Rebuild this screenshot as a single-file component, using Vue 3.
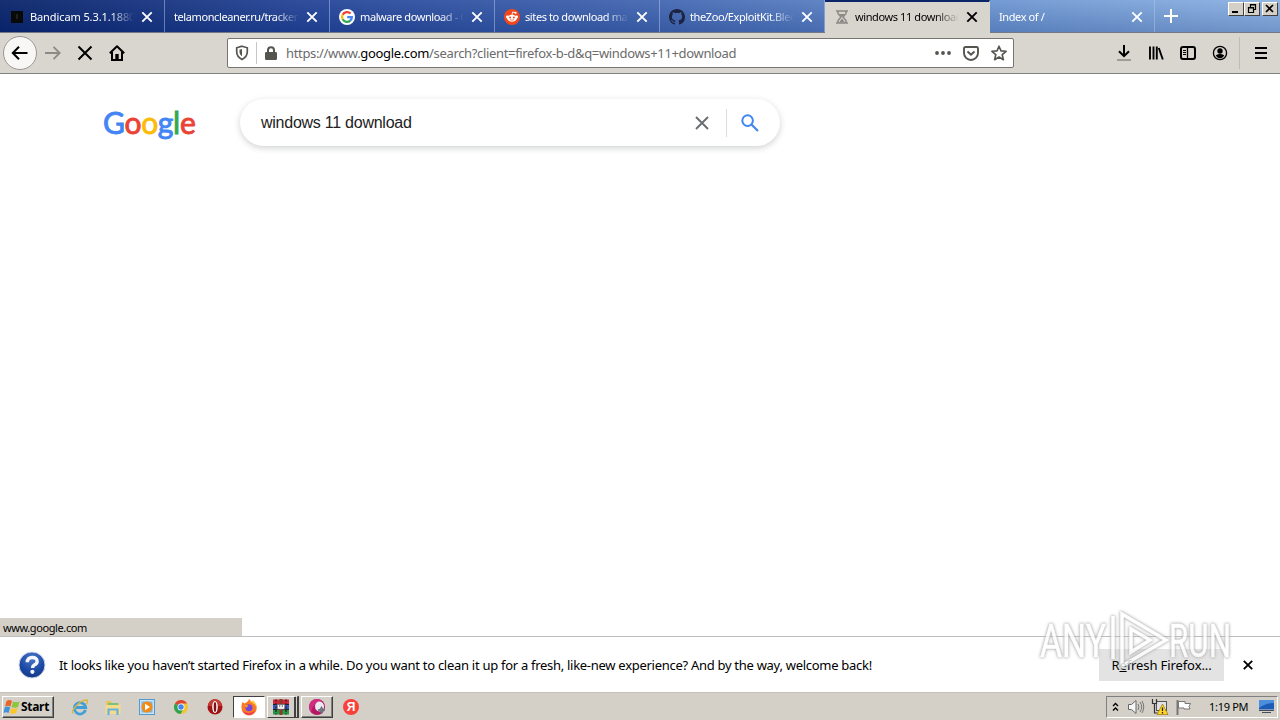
<script setup>
const tabs = [
    { title: 'Bandicam 5.3.1.1880', icon: 'bandicam', cls: 'wide' },
    { title: 'telamoncleaner.ru/tracker', icon: '', cls: '' },
    { title: 'malware download - G', icon: 'google', cls: '' },
    { title: 'sites to download mal', icon: 'reddit', cls: '' },
    { title: 'theZoo/ExploitKit.Blee', icon: 'github', cls: '' },
    { title: 'windows 11 download', icon: 'hourglass', cls: '', active: true },
    { title: 'Index of /', icon: '', cls: '' }
]
</script>

<template>
    <div class="screen">
        <div class="tabs">
            <div v-for="t in tabs" :key="t.title" class="tab" :class="{ active: t.active }">
                <svg v-if="t.icon === 'bandicam'" class="fav" viewBox="0 0 16 16">
                    <rect x="2" y="2" width="12" height="12" fill="#090909" />
                    <path d="M8 5v5" stroke="#3a3a3a" />
                </svg>
                <svg v-if="t.icon === 'google'" class="fav" viewBox="0 0 16 16">
                    <circle cx="8" cy="8" r="8" fill="#fff" />
                    <g fill="none" stroke-width="2.2">
                        <path d="M11.6 4.6A4.9 4.9 0 0 0 3.7 5.7" stroke="#ea4335" />
                        <path d="M3.7 5.6a4.9 4.9 0 0 0 0 4.8" stroke="#fbbc05" />
                        <path d="M3.7 10.3a4.9 4.9 0 0 0 7.6 1.3" stroke="#34a853" />
                        <path d="M11.2 11.7A4.9 4.9 0 0 0 12.9 8.1H8.2" stroke="#4285f4" />
                    </g>
                </svg>
                <svg v-if="t.icon === 'reddit'" class="fav" viewBox="0 0 16 16">
                    <circle cx="8" cy="8" r="8" fill="#f4471c" />
                    <path d="M8 6l.7-3 2.4.6" fill="none" stroke="#fff" stroke-width=".9" />
                    <circle cx="11.5" cy="3.8" r="1.1" fill="#fff" />
                    <circle cx="3.4" cy="8" r="1.4" fill="#fff" />
                    <circle cx="12.6" cy="8" r="1.4" fill="#fff" />
                    <ellipse cx="8" cy="9.2" rx="4.8" ry="3.5" fill="#fff" />
                    <circle cx="6.1" cy="8.4" r="1" fill="#f4471c" />
                    <circle cx="9.9" cy="8.4" r="1" fill="#f4471c" />
                    <path d="M5.9 10.7q2.1 1.2 4.2 0" fill="none" stroke="#f4471c" stroke-width=".7" />
                </svg>
                <svg v-if="t.icon === 'github'" class="fav" viewBox="0 0 16 16">
                    <path fill="#1b2440" d="M8 0C3.58 0 0 3.58 0 8c0 3.54 2.29 6.53 5.47 7.59.4.07.55-.17.55-.38 0-.19-.01-.82-.01-1.49-2.01.37-2.53-.49-2.69-.94-.09-.23-.48-.94-.82-1.13-.28-.15-.68-.52-.01-.53.63-.01 1.08.58 1.23.82.72 1.21 1.87.87 2.33.66.07-.52.28-.87.51-1.07-1.78-.2-3.64-.89-3.64-3.95 0-.87.31-1.59.82-2.15-.08-.2-.36-1.02.08-2.12 0 0 .67-.21 2.2.82a7.4 7.4 0 0 1 4 0c1.53-1.04 2.2-.82 2.2-.82.44 1.1.16 1.92.08 2.12.51.56.82 1.27.82 2.15 0 3.07-1.87 3.75-3.65 3.95.29.25.54.73.54 1.48 0 1.07-.01 1.93-.01 2.2 0 .21.15.46.55.38A8 8 0 0 0 16 8c0-4.42-3.58-8-8-8z" />
                </svg>
                <svg v-if="t.icon === 'hourglass'" class="fav" viewBox="0 0 16 16">
                    <path d="M2 2h12M2 14h12M4 2.500v2L7 8l-3 3.500v2M12 2.500v2L9 8l3 3.500v2" fill="none" stroke="#8b8985" stroke-width="1.500" />
                    <path d="M5 5h6L8 8zM8 9.500l3 4H5z" fill="#8b8985" />
                </svg>
                <span class="title" :class="t.cls">{{ t.title }}</span>
                <svg class="close" viewBox="0 0 12 12">
                    <path d="M1.300 1.300l9.400 9.400M10.700 1.300l-9.400 9.400" stroke="currentColor" stroke-width="1.9" />
                </svg>
            </div>
            <svg class="plus" viewBox="0 0 14 14"><path d="M7 0v14M0 7h14" stroke="#fff" stroke-width="2" /></svg>
            <div class="winbtns">
                <span class="wb"><svg viewBox="0 0 13 11"><path d="M3 9h6" stroke="#000" stroke-width="2" /></svg></span>
                <span class="wb"><svg viewBox="0 0 13 11"><path d="M5.500 4V1.500h5v5H8M5 2h6" fill="none" stroke="#000" stroke-width="1.200" /><path d="M3.500 4.500h5v5h-5zM3 5h6" fill="none" stroke="#000" stroke-width="1.200" /></svg></span>
                <span class="wb last"><svg viewBox="0 0 13 11"><path d="M3 2l7 7M10 2L3 9" stroke="#000" stroke-width="1.700" /></svg></span>
            </div>
        </div>

        <div class="nav">
            <div class="back">
                <svg width="18" height="16" viewBox="0 0 18 16"><path d="M16.500 8H2M8 1.800L1.800 8 8 14.200" fill="none" stroke="#000" stroke-width="2" /></svg>
            </div>
            <svg class="fwd" width="18" height="16" viewBox="0 0 18 16"><path d="M1 8h14.500M9.500 1.800L15.700 8l-6.200 6.200" fill="none" stroke="#8c8a86" stroke-width="1.800" /></svg>
            <svg class="stop" width="16" height="16" viewBox="0 0 16 16"><path d="M1.500 1.500l13 13M14.500 1.500l-13 13" stroke="#000" stroke-width="2" /></svg>
            <svg class="home" width="16" height="16" viewBox="0 0 16 16">
                <path d="M.8 8.300L8 1.200l7.200 7.100" fill="none" stroke="#000" stroke-width="2" stroke-linejoin="round" />
                <path d="M3 7v8h10V7" fill="none" stroke="#000" stroke-width="2" />
                <path d="M6.300 15V9h3.400v6z" fill="#000" />
            </svg>
            <div class="urlbar">
                <svg class="shield" width="14" height="16" viewBox="0 0 14 16">
                    <path d="M7 1.200l5.300 1.600v4c0 3.600-2 6-5.300 7.700-3.300-1.700-5.300-4.100-5.300-7.700v-4z" fill="none" stroke="#55544f" stroke-width="1.700" />
                    <path d="M7 4v7.300C5.200 10 4.500 8.600 4.500 6.800V4.700z" fill="#55544f" />
                </svg>
                <i class="vsep"></i>
                <svg class="lock" width="12" height="14" viewBox="0 0 12 14">
                    <path d="M3 7V4.300a3 3 0 0 1 6 0V7" fill="none" stroke="#55544f" stroke-width="2" />
                    <rect x="0" y="6" width="12" height="8" rx="1.300" fill="#55544f" />
                </svg>
                <span class="url">https://www.<b>google.com</b>/search?client=firefox-b-d&amp;q=windows+11+download</span>
                <svg class="dots" width="16" height="4" viewBox="0 0 16 4"><g fill="#55544f"><circle cx="2" cy="2" r="1.900" /><circle cx="8" cy="2" r="1.900" /><circle cx="14" cy="2" r="1.900" /></g></svg>
                <svg class="pocket" width="16" height="15" viewBox="0 0 16 15">
                    <path d="M1 2.500Q1 1 2.500 1h11Q15 1 15 2.500V7a7 7 0 0 1-14 0z" fill="none" stroke="#55544f" stroke-width="1.900" />
                    <path d="M4.500 5.500L8 8.800l3.500-3.300" fill="none" stroke="#55544f" stroke-width="1.900" />
                </svg>
                <svg class="star" width="16" height="16" viewBox="0 0 16 16"><path d="M8 1.200l2 4.700 5.100.4-3.900 3.400 1.200 5L8 12l-4.400 2.700 1.200-5L.9 6.300 6 5.900z" fill="none" stroke="#55544f" stroke-width="1.600" stroke-linejoin="round" /></svg>
            </div>
            <div class="tools">
                <svg width="16" height="18" viewBox="0 0 16 18"><path d="M8 1v11M3 7.200l5 5 5-5" fill="none" stroke="#000" stroke-width="2" /><path d="M1 16h14" stroke="#8b8985" stroke-width="1.500" /></svg>
                <svg width="16" height="16" viewBox="0 0 16 16"><path d="M2 1.500v13M5.500 1.500v13M8.800 1.500v13M10.800 3l4 11.500" stroke="#000" stroke-width="1.900" /></svg>
                <svg width="16" height="16" viewBox="0 0 16 16"><rect x="1" y="2" width="14" height="12" rx="2" fill="none" stroke="#000" stroke-width="2" /><path d="M7.500 2v12" stroke="#000" stroke-width="1.300" /><path d="M3 5.500h3M3 7.500h3M3 9.500h3" stroke="#000" stroke-width="1" /></svg>
                <svg width="16" height="16" viewBox="0 0 16 16"><circle cx="8" cy="8" r="6.600" fill="none" stroke="#000" stroke-width="1.300" /><circle cx="8" cy="6" r="2.700" /><path d="M3.800 10.200q4.200-2.400 8.400 0-1.300 3-4.200 3t-4.200-3z" /></svg>
            </div>
            <i class="navsep"></i>
            <svg class="burger" width="12" height="12" viewBox="0 0 12 12"><path d="M0 1h12M0 6h12M0 11h12" stroke="#000" stroke-width="2" /></svg>
        </div>

        <div class="page">
            <div class="logo"><span class="b">G</span><span class="r">o</span><span class="y">o</span><span class="b">g</span><span class="g">l</span><span class="r">e</span></div>
            <div class="search">
                <span class="query">windows 11 download</span>
                <svg class="clear" width="14" height="14" viewBox="0 0 14 14"><path d="M1 1l12 12M13 1L1 13" stroke="#6a6d71" stroke-width="1.900" /></svg>
                <i class="ssep"></i>
                <svg class="lens" width="18" height="18" viewBox="0 0 18 18"><circle cx="6.600" cy="6.600" r="5.300" fill="none" stroke="#4285f4" stroke-width="2" /><path d="M10.500 10.500l6.500 6.500" stroke="#4285f4" stroke-width="2.200" /></svg>
            </div>
            <div class="status"><span>www.google.com</span></div>
        </div>

        <div class="notice">
            <svg class="help" width="28" height="28" viewBox="0 0 28 28">
                <defs>
                    <radialGradient id="hb" cx=".5" cy=".25" r=".8"><stop offset="0" stop-color="#4a78c8" /><stop offset=".6" stop-color="#1c49a5" /><stop offset="1" stop-color="#12347f" /></radialGradient>
                </defs>
                <circle cx="14" cy="14" r="13" fill="url(#hb)" stroke="#c9d3e8" />
                <path d="M9.300 11.200q0-4.700 4.900-4.700t4.900 3.900q0 2.100-2.600 3.400-2 1.100-2 3.200" fill="none" stroke="#f5f7fb" stroke-width="3.400" />
                <circle cx="14.400" cy="20.800" r="2.100" fill="#f5f7fb" />
            </svg>
            <span class="msg">It looks like you haven’t started Firefox in a while. Do you want to clean it up for a fresh, like-new experience? And by the way, welcome back!</span>
            <div class="refresh"><span>R<u>e</u>fresh Firefox...</span></div>
            <svg class="nclose" width="10" height="10" viewBox="0 0 10 10"><path d="M.8.8l8.400 8.400M9.200.8L.8 9.200" stroke="#000" stroke-width="1.900" /></svg>
        </div>

        <div class="taskbar">
            <div class="start">
                <svg width="18" height="16" viewBox="0 0 17 16">
                    <path d="M3 2q3-2 5.500 0L7 7.500q-2.500-1.700-5.500 0z" fill="#e8642c" />
                    <path d="M9.500 2.500q3 1.500 6.500 0L14.500 8q-3 1.500-6.500 0z" fill="#8cc63e" />
                    <path d="M1.200 8.500q3-1.800 5.500 0L5 14q-2.500-1.700-5 0z" fill="#3f93dc" />
                    <path d="M7.700 9q3 1.500 6.500 0l-1.500 5q-3 1.500-6.500 0z" fill="#fbc62c" />
                </svg>
                <span>Start</span>
            </div>
            <svg class="ql ie" width="18" height="18" viewBox="0 0 18 18">
                <path d="M14.500 12A5.700 5.700 0 1 1 14.700 9.500H5" fill="none" stroke="#3f9fd9" stroke-width="2.800" />
                <path d="M2 15.500C-.5 13 8 2.500 15.500 2q2.300.5-.5 4.500" fill="none" stroke="#d9b53c" stroke-width="1.300" />
            </svg>
            <svg class="ql" width="18" height="18" viewBox="0 0 18 18">
                <path d="M2 3h5l1 2h7v10H2z" fill="#e5c65e" /><path d="M4 5h10v4H4z" fill="#7ec07a" /><path d="M1.500 7h15v9h-15z" fill="#f5dc8b" />
                <path d="M4.500 17v-5.500h9V17" fill="none" stroke="#69b1df" stroke-width="2.200" />
            </svg>
            <svg class="ql" width="18" height="18" viewBox="0 0 18 18">
                <rect x="1.500" y="1.500" width="15" height="15" fill="#c9e2f5" stroke="#529bd0" /><rect x="3.500" y="3.500" width="11" height="11" fill="#77b6e4" />
                <circle cx="9" cy="9" r="5.500" fill="#f28a16" /><path d="M7 5.800L12 9l-5 3.200z" fill="#fff" />
            </svg>
            <svg class="ql" width="18" height="18" viewBox="0 0 18 18">
                <circle cx="9" cy="9" r="7" fill="#f4c52e" /><path d="M9 9L2.900 5.500A7 7 0 0 1 15.100 5.500H9z" fill="#dc4437" /><path d="M9 9L2.900 5.500A7 7 0 0 0 8.500 16L11.500 11z" fill="#30a352" />
                <circle cx="9" cy="9" r="3.500" fill="#fff" /><circle cx="9" cy="9" r="2.700" fill="#4385ef" />
            </svg>
            <svg class="ql" width="18" height="18" viewBox="0 0 18 18">
                <circle cx="9" cy="9" r="7.500" fill="#a31515" /><path d="M2 8a7 7 0 0 1 14 0" fill="#c23b34" /><ellipse cx="9" cy="9" rx="2.800" ry="6" fill="#fff" /><ellipse cx="9" cy="9" rx="1.300" ry="5" fill="#7d1414" />
            </svg>
            <div class="task pressed">
                <svg width="18" height="18" viewBox="0 0 18 18">
                    <path d="M2.500 4l2 1.500L7 4q1.500-1.200 2-3 1.800 1 2.700 3 1-.5 1.300-1.500 3.800 3.500 3.700 7.500A7.500 7.500 0 0 1 1.500 10q-.3-3.500 1-6z" fill="#fb7b23" />
                    <path d="M9 1q1.800 1 2.700 3 1-.5 1.300-1.500 3.800 3.500 3.700 7-1.200-3-4.200-4.500-2.500-1-3.500-4z" fill="#ffd13b" />
                    <path d="M3 13q5.500 4.500 12-.5-2.500 5-7 4.500-3.500-.5-5-4z" fill="#f3365b" />
                    <circle cx="9" cy="9.800" r="3.500" fill="#7446dc" /><path d="M4 7.500q2.500-1.300 4.500.5l-2 1.500z" fill="#ff9a2a" />
                </svg>
            </div>
            <div class="task group">
                <svg width="18" height="18" viewBox="0 0 18 18">
                    <rect x="1" y="1.500" width="16" height="5" fill="#d02538" /><rect x="1" y="6.500" width="16" height="5" fill="#2c57c4" /><rect x="1" y="11.500" width="16" height="5" fill="#1f9a45" />
                    <path d="M1 6.500h16M1 11.500h16" stroke="#222" /><rect x="7.500" y="1" width="3" height="16" fill="#8b3b26" />
                    <path d="M4 1.500v15M14 1.500v15" stroke="#40222a" stroke-width="1.500" stroke-dasharray="2 1.500" />
                    <rect x="5" y="6" width="8" height="5.500" fill="#77747c" /><path d="M6.500 7v3h5V7M9 7v3" fill="none" stroke="#fff" stroke-width="1.400" />
                </svg>
            </div>
            <div class="task ball">
                <svg width="18" height="18" viewBox="0 0 18 18">
                    <circle cx="9" cy="9" r="8" fill="#b51765" /><path d="M9 1a8 8 0 0 0-6 13q2-9 11-11-2-2-5-2z" fill="#cf2f7c" /><ellipse cx="11.500" cy="8.500" rx="4.500" ry="5" fill="#eceaf0" />
                    <path d="M13.500 8.500l1 2.500 2.500 1-2.500 1-1 3-1-3-2.500-1 2.500-1z" fill="#69757f" stroke="#69757f" />
                </svg>
            </div>
            <div class="ya">Я</div>
            <div class="tray">
                <svg class="chev" width="7" height="10" viewBox="0 0 7 10"><path d="M1 4l2.500-2.500L6 4M1 8.500L3.500 6 6 8.500" fill="none" stroke="#000" stroke-width="1.400" /></svg>
                <svg width="18" height="16" viewBox="0 0 18 16"><path d="M1.500 5.500h3L9 1.500v13l-4.500-4h-3z" fill="#f7f7f7" stroke="#666" /><path d="M11 5q2 3 0 6M13 3q3.500 5 0 10M15 2q3.500 6 0 12" fill="none" stroke="#777" /></svg>
                <svg width="18" height="16" viewBox="0 0 18 16"><rect x="5.500" y="2.500" width="10" height="9" fill="#dfe3e8" stroke="#555" /><path d="M1.500 0v4.500h4V0M3.500 5v9h3" fill="none" stroke="#333" stroke-width="1.200" /><path d="M11.500 5l5.500 10.500h-11z" fill="#ffd526" stroke="#9c7600" stroke-width=".7" /><path d="M11.500 8.500v3.500M11.500 13v1.500" stroke="#222" stroke-width="1.300" /></svg>
                <svg width="18" height="16" viewBox="0 0 18 16"><path d="M2.500 1v15" stroke="#777" stroke-width="2" /><path d="M3.500 2.500h6.500v2h5.500l-1.500 3 1 2.500H9V9H3.500z" fill="#fff" stroke="#777" /></svg>
                <span class="clock">1:19 PM</span>
                <svg class="desk" width="17" height="15" viewBox="0 0 17 15"><path d="M1 1h15v9.500H1z" fill="#1c5cb6" /><path d="M1 1h15v3Q8 4 1 9z" fill="#4b8edb" /><path d="M1 11.500h15M4 13.500h9" stroke="#454f5c" stroke-width="1.200" /></svg>
            </div>
        </div>

        <svg class="mark" width="204" height="76" viewBox="0 0 204 76">
            <text x="6" y="54" textLength="66" lengthAdjust="spacingAndGlyphs">ANY</text>
            <text x="135" y="54" textLength="62" lengthAdjust="spacingAndGlyphs">RUN</text>
            <path d="M88 11l44 26-44 26zM79 13v43M97 26v23l19-12z" />
        </svg>
    </div>
</template>

<style>
body {
    margin: 0;
    overflow: hidden;
}
</style>

<style scoped>
.screen {
    width: 1280px;
    height: 720px;
    position: relative;
    overflow: hidden;
    display: flex;
    flex-direction: column;
    background: #fff;
    font-family: "Noto Sans", "Open Sans", sans-serif;
    font-size: 11px;
    color: #000;
}

svg {
    flex: none;
    display: block;
}

.tabs {
    height: 33px;
    box-sizing: border-box;
    display: flex;
    background: linear-gradient(to bottom, rgba(255, 255, 255, 0.05), rgba(0, 30, 100, 0.2)), linear-gradient(to right, #0a246a 0, #27479a 330px, #4468b2 660px, #6f97d2 1000px, #8db3e2 1280px);
    border-bottom: 1px solid #737885;
}

.tab {
    width: 165px;
    box-sizing: border-box;
    border-right: 1px solid rgba(180, 200, 235, 0.5);
    display: flex;
    align-items: center;
    padding: 2px 11px 0 9px;
    color: #fff;
}

.tab:last-of-type {
    padding-left: 8px;
}

.tab.active {
    height: 33px;
    background: #d8d5cf;
    color: #000;
    border-top: 2px solid #0a246a;
    border-right-color: #d8d5cf;
    padding: 0 11px 1px 9px;
}

.fav {
    width: 16px;
    height: 16px;
    margin-right: 5px;
}

.title {
    flex: 1;
    overflow: hidden;
    white-space: nowrap;
    line-height: 16px;
    letter-spacing: -0.4px;
    mask-image: linear-gradient(to left, transparent 0, #000 24px);
    margin-right: 7px;
}

.title.wide {
    letter-spacing: -0.1px;
}

.close {
    width: 12px;
    height: 12px;
}

.plus {
    width: 14px;
    height: 14px;
    margin: 9px 0 0 9px;
}

.winbtns {
    display: flex;
    margin: 2px 2px 0 auto;
    height: 14px;
}

.wb {
    width: 16px;
    height: 14px;
    box-sizing: border-box;
    background: #d4d0c8;
    border: 1px solid;
    border-color: #fff #404040 #404040 #fff;
}

.wb svg {
    width: 13px;
    height: 11px;
}

.wb.last {
    margin-left: 2px;
}

.nav {
    height: 41px;
    box-sizing: border-box;
    background: #d9d6d0;
    border-bottom: 1px solid #808080;
    display: flex;
    align-items: center;
}

.back {
    width: 34px;
    height: 34px;
    box-sizing: border-box;
    margin-left: 3px;
    border: 1px solid #9b9893;
    border-radius: 50%;
    background: #f8f7f6;
    display: flex;
    align-items: center;
    justify-content: center;
}

.fwd {
    margin-left: 7px;
}

.stop {
    margin-left: 15px;
}

.home {
    margin-left: 16px;
}

.urlbar {
    width: 787px;
    height: 30px;
    box-sizing: border-box;
    margin-left: 102px;
    border: 1px solid #777570;
    border-radius: 2px;
    background: #fff;
    display: flex;
    align-items: center;
}

.shield {
    margin-left: 7px;
}

.vsep {
    width: 1px;
    height: 22px;
    background: #c6c6c6;
    margin: 0 8px 0 7px;
}

.url {
    margin-left: 9px;
    width: 649px;
    font-size: 13px;
    letter-spacing: -0.34px;
    color: #6b6b6b;
    white-space: nowrap;
}

.url b {
    font-weight: normal;
    color: #000;
}

.pocket {
    margin-left: 12px;
}

.star {
    margin-left: 12px;
}

.tools {
    display: flex;
    gap: 16px;
    align-items: center;
    margin-left: 102px;
}

.navsep {
    width: 1px;
    height: 32px;
    background: #bfbbb5;
    margin-left: 11px;
}

.burger {
    margin-left: 15px;
}

.page {
    flex: 1;
    display: flex;
    position: relative;
}

.logo {
    width: 92px;
    margin: 29px 0 0 103px;
    font: 30px/38px Lato, sans-serif;
    letter-spacing: -0.3px;
    white-space: nowrap;
    -webkit-text-stroke: 0.9px currentColor;
}

.b {
    color: #4285f4;
}

.r {
    color: #ea4335;
}

.y {
    color: #fbbc05;
}

.g {
    color: #34a853;
}

.search {
    width: 540px;
    height: 47px;
    margin: 25px 0 0 45px;
    border-radius: 24px;
    box-shadow: 0 2px 6px rgba(60, 64, 67, 0.24);
    display: flex;
    align-items: center;
}

.query {
    width: 434px;
    margin-left: 21px;
    font: 16px/20px "Liberation Sans", Arial, sans-serif;
    letter-spacing: -0.25px;
    color: #222;
}

.ssep {
    width: 1px;
    height: 28px;
    background: #dadce0;
    margin: 0 14px 0 17px;
}

.status {
    position: absolute;
    left: 0;
    bottom: 0;
    width: 242px;
    height: 18px;
    background: #d4d0c8;
    line-height: 20px;
    letter-spacing: -0.4px;
    padding-left: 3px;
    box-sizing: border-box;
}

.notice {
    height: 57px;
    box-sizing: border-box;
    border-top: 1px solid #bdbdbd;
    border-bottom: 1px solid #c4c0ba;
    display: flex;
    align-items: center;
}

.help {
    margin-left: 18px;
}

.msg {
    width: 1040px;
    margin-left: 13px;
    font-size: 13px;
    letter-spacing: -0.285px;
    white-space: nowrap;
}

.refresh {
    width: 125px;
    height: 32px;
    background: #e3e3e3;
    display: flex;
    align-items: center;
    justify-content: center;
    font-size: 13px;
    letter-spacing: -0.1px;
}

.nclose {
    margin-left: 19px;
}

.taskbar {
    height: 27px;
    background: #d4d0c8;
    display: flex;
    align-items: center;
}

.start {
    width: 52px;
    height: 22px;
    margin-left: 2px;
    box-sizing: border-box;
    border: 1px solid;
    border-color: #fff #404040 #404040 #fff;
    box-shadow: inset -1px -1px #808080;
    display: flex;
    align-items: center;
    font-weight: bold;
    font-size: 12px;
}

.start span {
    letter-spacing: -0.3px;
}

.ql {
    margin-left: 16px;
}

.ie {
    margin: 0 -1px 0 17px;
}

.task {
    width: 32px;
    height: 22px;
    box-sizing: border-box;
    border: 1px solid;
    border-color: #fff #404040 #404040 #fff;
    box-shadow: inset -1px -1px #808080;
    display: flex;
    align-items: center;
    justify-content: center;
    margin-left: 2px;
}

.task.pressed {
    margin-left: 9px;
    border-color: #404040 #fff #fff #404040;
    box-shadow: none;
    background: #fff;
}

.task.group {
    border-right: 5px double #404040;
    box-shadow: none;
}

.ya {
    width: 16px;
    height: 16px;
    margin-left: 10px;
    border-radius: 50%;
    background: #fb3f3b;
    color: #fff;
    font: bold 12px/16px "Liberation Sans", sans-serif;
    text-align: center;
}

.tray {
    width: 172px;
    height: 22px;
    box-sizing: border-box;
    margin: 0 2px 0 auto;
    border: 1px solid;
    border-color: #808080 #fff #fff #808080;
    display: flex;
    align-items: center;
    gap: 6px;
}

.chev {
    margin: 0 2px 0 5px;
}

.clock {
    margin-left: 10px;
    width: 43px;
    letter-spacing: -0.3px;
    white-space: nowrap;
}

.mark {
    position: absolute;
    left: 1034px;
    top: 603px;
    opacity: 0.8;
    font: 46px Roboto, sans-serif;
    fill: #fff;
    stroke: #fff;
    stroke-width: 0.5px;
    filter: drop-shadow(0 0 1.5px #999) drop-shadow(0 0 1px #ccc);
}

.mark path {
    fill: none;
    stroke-width: 3.5px;
}
</style>
